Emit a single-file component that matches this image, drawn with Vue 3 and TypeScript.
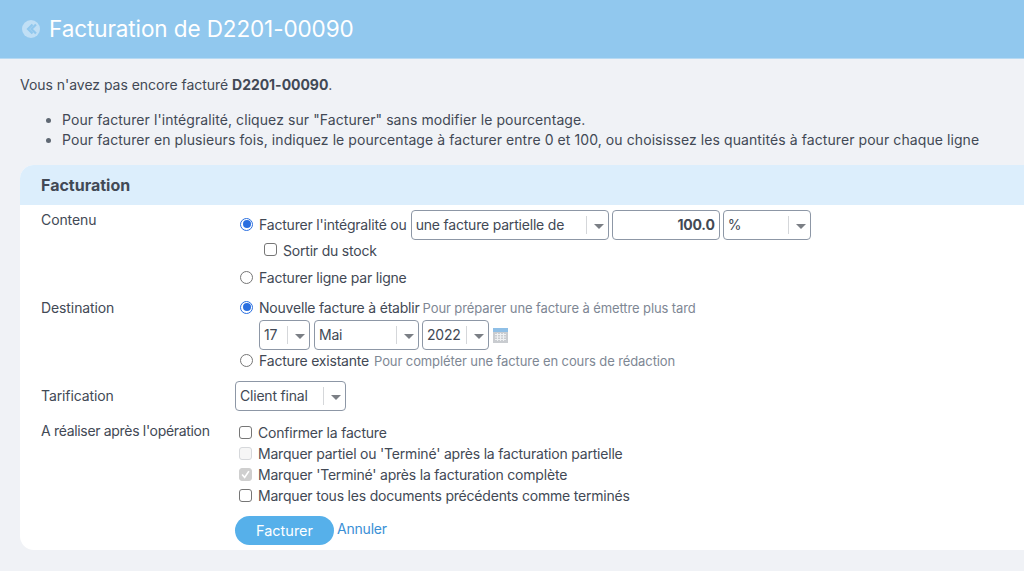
<script setup lang="ts">
const afterOps = [
  { label: "Confirmer la facture", kind: "" },
  { label: "Marquer partiel ou 'Terminé' après la facturation partielle", kind: "disabled" },
  { label: "Marquer 'Terminé' après la facturation complète", kind: "checked" },
  { label: "Marquer tous les documents précédents comme terminés", kind: "" },
];
</script>

<template>
  <div class="page">
    <header class="top">
      <svg class="back" viewBox="0 0 18 18" width="18" height="18">
        <circle cx="9" cy="9" r="9" fill="#c0dff5" />
        <path d="M10.500 4.500 6 9l4.500 4.500M14 4.500 9.500 9l4.500 4.500" fill="none" stroke="#91c8ee" stroke-width="2.200" />
      </svg>
      <h1>Facturation de D2201-00090</h1>
    </header>

    <main class="content">
      <p class="intro">Vous n'avez pas encore facturé <b>D2201-00090</b>.</p>
      <ul class="hints">
        <li>Pour facturer l'intégralité, cliquez sur "Facturer" sans modifier le pourcentage.</li>
        <li>Pour facturer en plusieurs fois, indiquez le pourcentage à facturer entre 0 et 100, ou choisissez les quantités à facturer pour chaque ligne</li>
      </ul>

      <section class="card">
        <h2>Facturation</h2>
        <div class="rows">
          <div class="row r-contenu">
            <div class="lab">Contenu</div>
            <div class="val">
              <div class="line l1">
                <span class="radio on"></span>
                <span class="t">Facturer l'intégralité ou</span>
                <span class="sel w-part"><span class="v">une facture partielle de</span><i class="sep"></i><i class="car"></i></span>
                <span class="num">100.0</span>
                <span class="sel w-pct"><span class="v">%</span><i class="sep"></i><i class="car"></i></span>
              </div>
              <div class="line l2"><span class="box"></span><span class="t">Sortir du stock</span></div>
              <div class="line l3"><span class="radio"></span><span class="t">Facturer ligne par ligne</span></div>
            </div>
          </div>

          <div class="row r-dest">
            <div class="lab">Destination</div>
            <div class="val">
              <div class="line"><span class="radio on"></span><span class="t">Nouvelle facture à établir</span><span class="note">Pour préparer une facture à émettre plus tard</span></div>
              <div class="line dates">
                <span class="sel w-d"><span class="v">17</span><i class="sep"></i><i class="car"></i></span>
                <span class="sel w-m"><span class="v">Mai</span><i class="sep"></i><i class="car"></i></span>
                <span class="sel w-y"><span class="v">2022</span><i class="sep"></i><i class="car"></i></span>
                <svg class="cal" viewBox="0 0 15 15" width="15" height="15">
                  <rect x="0" y="0" width="15" height="15" fill="#c9ccd0" />
                  <rect x="0" y="0" width="15" height="4" fill="#8fbfe6" />
                  <path d="M2 6.500h11M2 9h11M2 11.500h11M4.500 5v8M7.500 5v8M10.500 5v8" stroke="#eef0f2" stroke-width="1" />
                </svg>
              </div>
              <div class="line"><span class="radio"></span><span class="t">Facture existante</span><span class="note n2">Pour compléter une facture en cours de rédaction</span></div>
            </div>
          </div>

          <div class="row r-tarif">
            <div class="lab">Tarification</div>
            <div class="val"><span class="sel w-client"><span class="v">Client final</span><i class="sep"></i><i class="car"></i></span></div>
          </div>

          <div class="row r-after">
            <div class="lab">A réaliser après l'opération</div>
            <div class="val checks">
              <div v-for="op in afterOps" :key="op.label" class="line cl">
                <span class="box" :class="op.kind">
                  <svg v-if="op.kind === 'checked'" viewBox="0 0 13 13" width="11" height="11"><path d="M2.500 6.500 5.500 10 10.500 2.500" fill="none" stroke="#fff" stroke-width="2" /></svg>
                </span>
                <span class="t">{{ op.label }}</span>
              </div>
              <div class="actions">
                <button class="btn" type="button">Facturer</button>
                <a class="cancel" href="#">Annuler</a>
              </div>
            </div>
          </div>
        </div>
      </section>
    </main>
  </div>
</template>

<style>
html, body { margin: 0; background: #f0f2f6; overflow: hidden; }
</style>

<style scoped>
.page { width: 1024px; height: 571px; overflow: hidden; background: #f0f2f6; color: #424955; font-family: Inter, "Noto Sans", sans-serif; font-size: 14px; line-height: 20px; letter-spacing: -0.1px; }
.top { height: 59px; background: #91c8ee; border-bottom: 1px solid #b7daf3; display: flex; align-items: center; padding-left: 22px; gap: 9px; box-sizing: border-box; }
.back { flex: none; }
.top h1 { margin: 0; color: #fff; font-size: 22.500px; font-weight: 400; letter-spacing: -0.1px; }
.content { padding: 16px 0 0 20px; }
.intro { margin: 0; height: 20px; letter-spacing: -0.03px; }
.intro b { font-weight: 700; }
.hints { margin: 15px 0 0; padding: 0 0 0 42px; height: 40px; letter-spacing: 0.08px; }
.hints li { height: 20px; white-space: nowrap; }
.hints li::marker { color: #5f6873; }
.card { margin-top: 15px; width: 1100px; height: 385px; background: #fff; border-radius: 14px; overflow: hidden; }
.card h2 { margin: 0; height: 40px; background: #dceefc; padding-left: 21px; font-size: 16px; line-height: 41px; font-weight: 700; letter-spacing: 0; }
.row { display: flex; }
.lab { width: 194px; padding-left: 21px; flex: none; }
.val { letter-spacing: -0.2px; }
.r-contenu { padding-top: 5px; height: 83px; }
.r-dest { padding-top: 5px; height: 83px; }
.r-tarif { height: 40px; }
.r-tarif .lab { padding-top: 5px; }
.line { display: flex; align-items: center; white-space: nowrap; }
.r-contenu .val, .r-dest .val { padding-left: 5px; }
.radio { width: 11px; height: 11px; border: 1px solid #767676; border-radius: 50%; background: #fff; margin: 0 6px 2px 0; flex: none; position: relative; }
.radio.on { border-color: #2a6fe0; }
.radio.on::after { content: ""; position: absolute; inset: 1.500px; background: #2a6fe0; border-radius: 50%; }
.box { width: 11px; height: 11px; border: 1px solid #767676; border-radius: 3px; background: #fff; flex: none; display: inline-flex; margin: 0 6px 0 0; }
.l2 .box { margin-bottom: 3px; }
.box.disabled { border-color: #d6d8db; background: #f6f6f6; }
.box.checked { border-color: #cfcfcf; background: #cfcfcf; }
.sel { display: inline-flex; align-items: center; box-sizing: border-box; height: 30px; border: 1px solid #8d97a6; border-radius: 4px; background: #fff; padding-left: 4px; color: #424955; }
.sel .v { flex: 1; }
.sep { width: 1px; height: 18px; background: #d5d7da; }
.car { width: 0; height: 0; border-left: 5px solid transparent; border-right: 5px solid transparent; border-top: 5px solid #7b7f85; margin: 2px 4px 0 7px; }
.l1 { height: 30px; }
.t { flex: none; }
.w-part { width: 198px; margin-left: 4px; }
.num { box-sizing: border-box; width: 108px; height: 30px; margin-left: 3px; border: 1px solid #8d97a6; border-radius: 4px; font-weight: 700; text-align: right; padding-right: 4px; line-height: 28px; }
.w-pct { width: 88px; margin-left: 3px; }
.l2 { padding-left: 24px; height: 20px; margin-top: 1px; }
.l3 { margin-top: 7px; height: 20px; }
.note { margin-left: 3px; font-size: 13px; color: #7e8794; letter-spacing: -0.1px; }
.note.n2 { margin-left: 5px; }
.r-dest .line { height: 20px; }
.r-dest .line.dates { height: 30px; padding-left: 19px; margin: 2px 0 1px; }
.w-d { width: 51px; }
.w-m { width: 105px; margin-left: 4px; }
.w-y { width: 67px; margin-left: 3px; }
.cal { margin-left: 4px; }
.r-tarif .sel { width: 111px; }
.r-after .lab { letter-spacing: -0.32px; }
.checks { padding: 1px 0 0 4px; }
.cl { height: 21px; }
.actions { display: flex; align-items: flex-start; margin: 10px 0 0 -4px; }
.btn { width: 99px; height: 29px; border: 0; border-radius: 15px; background: #56b0ea; color: #fff; font: inherit; font-size: 14.500px; padding: 0; }
.cancel { margin-left: 3px; color: #3a90d6; text-decoration: none; line-height: 26px; }
</style>
